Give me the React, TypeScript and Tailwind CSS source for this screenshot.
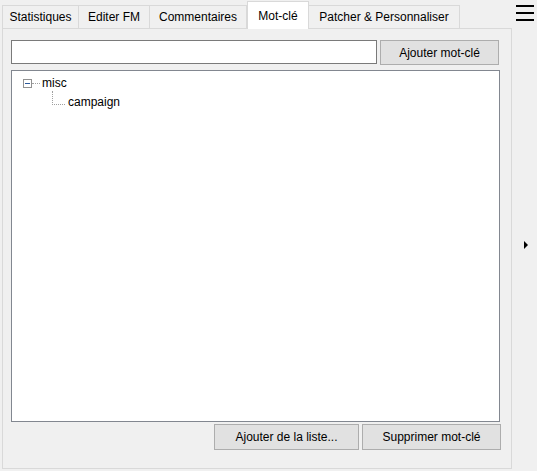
const tabs = [
  { label: "Statistiques", w: "w-[77px]" },
  { label: "Editer FM", w: "w-[71px]" },
  { label: "Commentaires", w: "w-[97px]" },
  { label: "Mot-clé", w: "w-[62px]", active: true },
  { label: "Patcher & Personnaliser", w: "w-[151px]" },
];

function Tab({ label, w, active }: { label: string; w: string; active?: boolean }) {
  if (active) {
    return (
      <div
        className={`${w} relative z-10 -mb-px flex h-[28px] items-start justify-center border border-b-0 border-[#d9d9d9] bg-white pt-[5px]`}
      >
        {label}
      </div>
    );
  }
  return (
    <div
      className={`${w} flex h-[23px] items-center justify-center border border-b-0 border-l-0 border-[#d9d9d9] bg-[#f0f0f0] first:border-l`}
    >
      {label}
    </div>
  );
}

function WinButton({ children, className }: { children: React.ReactNode; className: string }) {
  return (
    <button
      type="button"
      className={`${className} flex items-center justify-center border border-[#adadad] bg-[#e1e1e1] text-[12px] text-black`}
    >
      {children}
    </button>
  );
}

export default function App() {
  return (
    <div
      className="flex h-[471px] w-[537px] bg-[#f0f0f0] text-[12px] text-black"
      style={{ fontFamily: '"Liberation Sans", Arial, sans-serif' }}
    >
      <div className="flex w-[512px] flex-col">
        {/* tab strip */}
        <div className="flex h-[28px] items-end pl-[2px]">
          {tabs.map((t) => (
            <Tab key={t.label} {...t} />
          ))}
        </div>

        {/* tab page */}
        <div className="ml-[2px] flex h-[441px] w-[510px] flex-col border border-[#d9d9d9] bg-[#f0f0f0] pl-[8px] pt-[11px]">
          <div className="flex items-start gap-[3px]">
            <input
              type="text"
              className="h-[24px] w-[366px] border border-[#7a7a7a] bg-white px-1 outline-none"
            />
            <WinButton className="h-[25px] w-[119px]">Ajouter mot-clé</WinButton>
          </div>

          <div className="mt-[5px] h-[352px] w-[489px] border border-[#828790] bg-white">
            <div className="relative pl-[11px] pt-[3px]">
              <div className="flex h-[18px] items-center">
                <span className="flex h-[9px] w-[9px] items-center justify-center border border-[#919191] bg-white">
                  <span className="h-px w-[5px] bg-[#2d5a9c]" />
                </span>
                <span className="w-[8px] border-t border-dotted border-[#a0a0a0]" />
                <span className="pl-[2px]">misc</span>
              </div>
              <div className="flex h-[20px] items-center pl-[29px]">
                <span className="mb-[9px] h-[14px] w-[13px] border-b border-l border-dotted border-[#a0a0a0]" />
                <span className="pl-[3px]">campaign</span>
              </div>
            </div>
          </div>

          <div className="mt-[2px] flex gap-[3px] pl-[203px]">
            <WinButton className="h-[26px] w-[145px]">Ajouter de la liste...</WinButton>
            <WinButton className="h-[26px] w-[139px]">Supprimer mot-clé</WinButton>
          </div>
        </div>
      </div>

      {/* right strip */}
      <div className="flex w-[25px] flex-col items-center">
        <div className="mt-[5px] flex w-[18px] flex-col gap-[5px]">
          <span className="h-[2px] bg-black" />
          <span className="h-[2px] bg-black" />
          <span className="h-[2px] bg-black" />
        </div>
        <div className="mt-[220px] ml-[2px] h-0 w-0 border-y-[4px] border-l-[4px] border-y-transparent border-l-black" />
      </div>
    </div>
  );
}
